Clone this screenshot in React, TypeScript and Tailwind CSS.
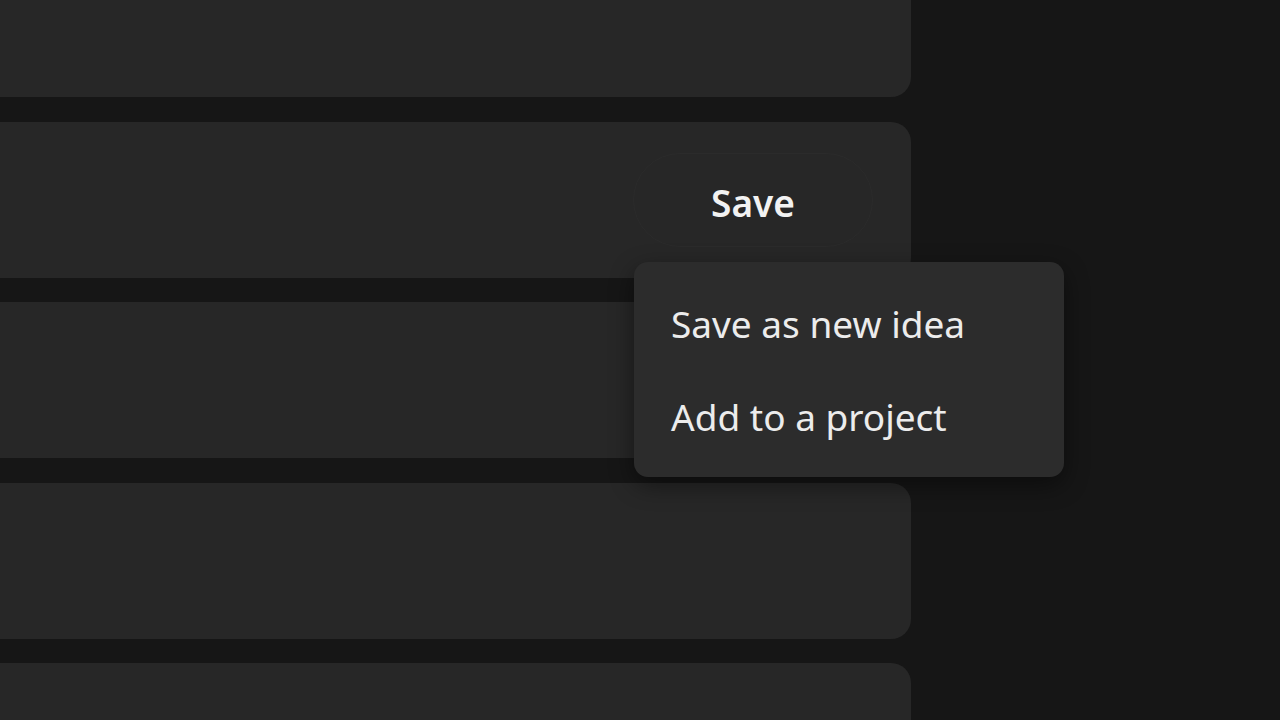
export default function App() {
  const cards = [0, 1, 2, 3, 4];

  return (
    <div
      className="relative w-[1280px] h-[720px] overflow-hidden bg-[#161616] text-[#e8e8e8]"
      style={{ fontFamily: '"Noto Sans", "Open Sans", sans-serif' }}
    >
      <div className="flex flex-col gap-[24.5px] -mt-[59px] w-[911px]">
        {cards.map((i) => (
          <div key={i} className="h-[156px] shrink-0 rounded-r-[20px] bg-[#272727] flex items-center justify-end pr-[38px]">
            {i === 1 && (
              <button className="h-[94px] w-[240px] pt-[6px] rounded-full border border-[#2b2b2b] bg-[#272727] text-[37px] font-semibold text-[#f2f2f2] flex items-center justify-center">
                Save
              </button>
            )}
          </div>
        ))}
      </div>

      <div className="absolute left-[634px] top-[262px] w-[430px] h-[215px] rounded-[14px] bg-[#2c2c2c] shadow-[0_8px_24px_rgba(0,0,0,0.45)] flex flex-col justify-center px-[37px] gap-[34px]">
        <div className="text-[37px] leading-[59px] text-[#ececec]">Save as new idea</div>
        <div className="text-[37px] leading-[59px] text-[#ececec]">Add to a project</div>
      </div>
    </div>
  );
}
